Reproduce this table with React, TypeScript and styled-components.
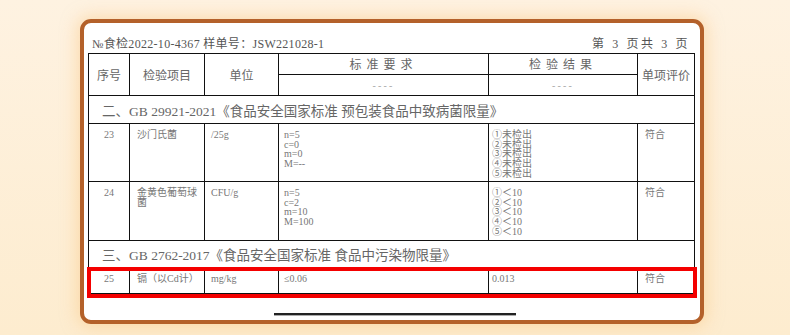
import React from 'react';
import styled, { createGlobalStyle } from 'styled-components';

const GlobalStyle = createGlobalStyle`
    html, body {
        margin: 0;
        padding: 0;
    }
    body {
        width: 790px;
        height: 335px;
        overflow: hidden;
        background: linear-gradient(180deg, #fef2e1 0%, #fdeccf 100%);
        font-family: "Liberation Serif", "Noto Sans CJK SC", serif;
    }
`;

const Page = styled.div`
    padding: 19px 0 0 80px;
`;

const Card = styled.div`
    box-sizing: border-box;
    width: 624px;
    height: 305px;
    background: #fff;
    border: 4px solid #b4612a;
    border-radius: 11px;
    box-shadow: 0 0 16px 3px rgba(252, 200, 130, 0.5);
    padding: 0 6px 0 4px;
    display: flex;
    flex-direction: column;
`;

const HeaderLine = styled.div`
    display: flex;
    justify-content: space-between;
    padding: 14px 4px 2px 4px;
    font-size: 12px;
    line-height: 14px;
    color: #555;
`;

const DocNo = styled.span`
    letter-spacing: 0.3px;
`;

const PageNo = styled.span`
    letter-spacing: 2.6px;
`;

const TableWrap = styled.div`
    position: relative;
`;

const Table = styled.table`
    width: 606px;
    border-collapse: collapse;
    table-layout: fixed;
    color: #666;
`;

const HeadCell = styled.th<{ $spaced?: boolean }>`
    border: 1px solid #111;
    font-weight: normal;
    font-size: 12px;
    line-height: 14px;
    height: 20px;
    padding: 0;
    text-align: center;
    color: #666;
    letter-spacing: ${(p) => (p.$spaced ? '5px' : '0')};
    font-family: "Noto Sans CJK SC", sans-serif;
`;

const Dash = styled.span`
    font-family: "Liberation Serif", serif;
    font-size: 10px;
    color: #a8a8a8;
    letter-spacing: 2.2px;
`;

const SectionCell = styled.td<{ $h: number }>`
    border: 1px solid #111;
    height: ${(p) => p.$h}px;
    padding: 0 0 0 13px;
    font-size: 13.5px;
    color: #666;
    vertical-align: middle;
`;

const Cell = styled.td<{ $h?: number; $center?: boolean; $pl?: number }>`
    border: 1px solid #111;
    vertical-align: top;
    height: ${(p) => p.$h ?? 26}px;
    box-sizing: border-box;
    padding: 6px 4px 0 ${(p) => p.$pl ?? 6}px;
    text-align: ${(p) => (p.$center ? 'center' : 'left')};
    font-size: 10px;
    line-height: 9.7px;
    color: #777;
    word-break: break-all;
`;

const Lines = styled.div`
    white-space: pre-line;
`;

const Highlight = styled.div`
    position: absolute;
    left: -1px;
    right: -3px;
    bottom: -4px;
    height: 31px;
    border: 4px solid #f40000;
    box-sizing: border-box;
    pointer-events: none;
`;

const Footer = styled.div`
    flex: 1;
    display: flex;
    justify-content: center;
    align-items: flex-start;
    padding: 19px 0 0 8px;
`;

const ScrollBar = styled.div`
    width: 242px;
    height: 2px;
    background: #222;
    border-bottom: 1px solid #aaa;
`;

type Row = {
    no: string;
    item: string;
    unit: string;
    standard: string;
    result: string;
    verdict: string;
    h: number;
};

const section2: Row[] = [
    {
        no: '23',
        item: '沙门氏菌',
        unit: '/25g',
        standard: 'n=5\nc=0\nm=0\nM=--',
        result: '①未检出\n②未检出\n③未检出\n④未检出\n⑤未检出',
        verdict: '符合',
        h: 58,
    },
    {
        no: '24',
        item: '金黄色葡萄球菌',
        unit: 'CFU/g',
        standard: 'n=5\nc=2\nm=10\nM=100',
        result: '①＜10\n②＜10\n③＜10\n④＜10\n⑤＜10',
        verdict: '符合',
        h: 59,
    },
];

const DataRow: React.FC<{ row: Row }> = ({ row }) => (
    <tr>
        <Cell $h={row.h} $center $pl={4}>{row.no}</Cell>
        <Cell $h={row.h} $pl={7}>{row.item}</Cell>
        <Cell $h={row.h}>{row.unit}</Cell>
        <Cell $h={row.h} $pl={5}><Lines>{row.standard}</Lines></Cell>
        <Cell $h={row.h} $pl={3}><Lines>{row.result}</Lines></Cell>
        <Cell $h={row.h} $pl={7}>{row.verdict}</Cell>
    </tr>
);

export default function App() {
    return (
        <Page>
            <GlobalStyle />
            <Card>
                <HeaderLine>
                    <DocNo>№食检2022-10-4367 样单号：JSW221028-1</DocNo>
                    <PageNo>第 3 页共 3 页</PageNo>
                </HeaderLine>
                <TableWrap>
                    <Table>
                        <colgroup>
                            <col style={{ width: 41 }} />
                            <col style={{ width: 75 }} />
                            <col style={{ width: 74 }} />
                            <col style={{ width: 210 }} />
                            <col style={{ width: 149 }} />
                            <col style={{ width: 57 }} />
                        </colgroup>
                        <thead>
                            <tr>
                                <HeadCell rowSpan={2}>序号</HeadCell>
                                <HeadCell rowSpan={2}>检验项目</HeadCell>
                                <HeadCell rowSpan={2}>单位</HeadCell>
                                <HeadCell $spaced>标准要求</HeadCell>
                                <HeadCell $spaced>检验结果</HeadCell>
                                <HeadCell rowSpan={2}>单项评价</HeadCell>
                            </tr>
                            <tr>
                                <HeadCell><Dash>----</Dash></HeadCell>
                                <HeadCell><Dash>----</Dash></HeadCell>
                            </tr>
                        </thead>
                        <tbody>
                            <tr>
                                <SectionCell colSpan={6} $h={27}>
                                    二、GB 29921-2021《食品安全国家标准 预包装食品中致病菌限量》
                                </SectionCell>
                            </tr>
                            {section2.map((row) => (
                                <DataRow key={row.no} row={row} />
                            ))}
                            <tr>
                                <SectionCell colSpan={6} $h={26}>
                                    三、GB 2762-2017《食品安全国家标准 食品中污染物限量》
                                </SectionCell>
                            </tr>
                            <tr>
                                <Cell $h={26} $center $pl={4}>25</Cell>
                                <Cell $h={26} $pl={7}>镉（以Cd计）</Cell>
                                <Cell $h={26}>mg/kg</Cell>
                                <Cell $h={26} $pl={5}>≤0.06</Cell>
                                <Cell $h={26} $pl={3}>0.013</Cell>
                                <Cell $h={26} $pl={7}>符合</Cell>
                            </tr>
                        </tbody>
                    </Table>
                    <Highlight />
                </TableWrap>
                <Footer>
                    <ScrollBar />
                </Footer>
            </Card>
        </Page>
    );
}
